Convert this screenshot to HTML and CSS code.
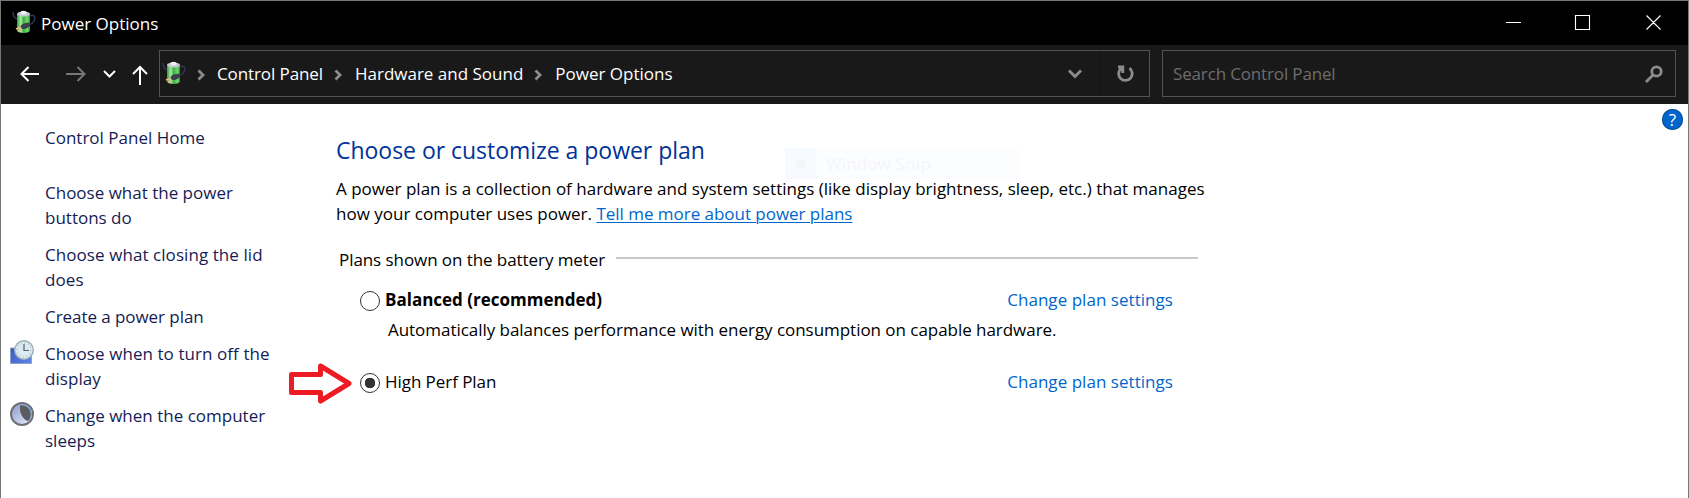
FILE: index.html
```
<!DOCTYPE html>
<html lang="en">
<head>
    <meta charset="UTF-8">
    <meta name="viewport" content="width=device-width, initial-scale=1.0">
    <title>Power Options</title>
    <link rel="stylesheet" href="styles.css">
</head>
<body>
    <svg class="defs" width="0" height="0">
        <defs>
            <linearGradient id="green" x1="0" x2="1" y1="0" y2="0">
                <stop offset="0" stop-color="#2f9e3a"/>
                <stop offset="0.3" stop-color="#a6eda0"/>
                <stop offset="0.5" stop-color="#3fae45"/>
                <stop offset="0.8" stop-color="#6fdc6c"/>
                <stop offset="1" stop-color="#2c8f35"/>
            </linearGradient>
            <linearGradient id="blue" x1="0" x2="1" y1="0" y2="1">
                <stop offset="0" stop-color="#3558c0"/>
                <stop offset="1" stop-color="#5f86e6"/>
            </linearGradient>
            <linearGradient id="moon" x1="0" x2="1" y1="0" y2="1">
                <stop offset="0" stop-color="#8796cc"/>
                <stop offset="1" stop-color="#eef2ff"/>
            </linearGradient>
        </defs>
        <symbol id="battery" viewBox="0 0 24 24">
            <path d="M1 2c0 4 2 6 4 7M18 6c4-2 6 1 4 5-1 2-2 3-4 3" fill="none" stroke="#34345a" stroke-width="1.500"/>
            <path d="M5 4h13v17c-2 2.500-11 2.500-13 0z" fill="url(#green)"/>
            <ellipse cx="11.500" cy="4" rx="6.500" ry="2.500" fill="#c9ccd6"/>
            <ellipse cx="11.500" cy="2.600" rx="3" ry="1.900" fill="#f1f1f6"/>
            <path d="M8 17c2-3 6-4.500 11-3.500-1 3-5 5.500-9 5z" fill="#3d4050" stroke="#22232e" stroke-width=".6"/>
            <path d="M9 17l-5 2M10 19l-4 2.500" stroke="#e0bd86" stroke-width="1.800"/>
        </symbol>
    </svg>

    <div class="window">
        <div class="titlebar">
            <svg class="app-icon"><use href="#battery"/></svg>
            <span class="title">Power Options</span>
            <svg class="controls" width="155" height="16" viewBox="0 0 155 16">
                <path d="M0 7.500h15M69.500 .5h14v14h-14zM140.500 .5l14 14M154.500 .5l-14 14" fill="none" stroke="#fff" stroke-width="1.100"/>
            </svg>
        </div>

        <div class="toolbar">
            <svg class="nav" width="130" height="24" viewBox="0 0 130 24" fill="none" stroke-width="2">
                <path d="M2 12h18M9.500 5l-7 7 7 7" stroke="#fff"/>
                <path d="M47 12h18M58.500 5l7 7-7 7" stroke="#777"/>
                <path d="M85 9l5.500 5.500L96 9" stroke="#fff"/>
                <path d="M121 23V5M114 12l7-7 7 7" stroke="#fff"/>
            </svg>
            <div class="address">
                <svg class="app-icon"><use href="#battery"/></svg>
                <svg class="chev" viewBox="0 0 8 12"><path d="M1.500 1.500L6 6l-4.500 4.500"/></svg>
                <span class="crumb first">Control Panel</span>
                <svg class="chev" viewBox="0 0 8 12"><path d="M1.500 1.500L6 6l-4.500 4.500"/></svg>
                <span class="crumb">Hardware and Sound</span>
                <svg class="chev" viewBox="0 0 8 12"><path d="M1.500 1.500L6 6l-4.500 4.500"/></svg>
                <span class="crumb">Power Options</span>
                <svg class="drop" width="14" height="10" viewBox="0 0 14 10"><path d="M1 1.500l6 6 6-6"/></svg>
                <div class="refresh">
                    <svg width="18" height="18" viewBox="0 0 18 18"><path d="M13.500 3.200a6.800 6.800 0 1 1-8.500 .3M2 2h4.800v6"/></svg>
                </div>
            </div>
            <div class="search">
                <span>Search Control Panel</span>
                <svg width="18" height="18" viewBox="0 0 18 18"><circle cx="11.500" cy="6.500" r="4.700"/><path d="M8 10l-7 7"/></svg>
            </div>
        </div>

        <div class="content">
            <div class="sidebar">
                <a class="home">Control Panel Home</a>
                <a class="task">Choose what the power<br>buttons do</a>
                <a class="task wide">Choose what closing the lid<br>does</a>
                <a class="task tight">Create a power plan</a>
                <a class="task wide">
                    <svg class="task-icon" viewBox="0 0 24 24">
                        <path d="M.5 8h21v15.500H.5z" fill="url(#blue)" stroke="#8e9fce"/>
                        <circle cx="14" cy="10" r="9.300" fill="#dcebf2" stroke="#9fb0ba" stroke-width="1.400"/>
                        <circle cx="14" cy="10" r="7" fill="none" stroke="#8ea3ae" stroke-dasharray="1 2.660"/>
                        <path d="M14 4v6.500h5" fill="none" stroke="#4c616d" stroke-width="1.200"/>
                    </svg>
                    Choose when to turn off the<br>display
                </a>
                <a class="task">
                    <svg class="task-icon" viewBox="0 0 24 24">
                        <circle cx="12" cy="12" r="11" fill="url(#moon)" stroke="#6c6f73" stroke-width="2"/>
                        <path d="M10 3.500c6-1.500 11 3 11 9 0 3-1.500 6-3.500 6.500C12.500 17 9 10 10 3.500z" fill="#5a5c5f"/>
                        <path d="M14 2.800c6 1.500 9 7.500 6.500 13.500" fill="none" stroke="#7ea6dc" stroke-width="1.300"/>
                    </svg>
                    Change when the computer<br>sleeps
                </a>
            </div>

            <div class="main">
                <h1>Choose or customize a power plan</h1>
                <p class="intro"><span class="first-line">A power plan is a collection of hardware and system settings (like display brightness, sleep, etc.) that manages</span><br>how your computer uses power. <a class="more">Tell me more about power plans</a></p>
                <div class="group"><span>Plans shown on the battery meter</span></div>
                <div class="plan">
                    <i class="radio"></i>
                    <b class="name">Balanced (recommended)</b>
                    <a class="change">Change plan settings</a>
                </div>
                <p class="desc">Automatically balances performance with energy consumption on capable hardware.</p>
                <div class="plan">
                    <i class="radio checked"></i>
                    <span class="name tight">High Perf Plan</span>
                    <a class="change">Change plan settings</a>
                    <svg class="arrow" width="64" height="42" viewBox="0 0 64 42">
                        <path d="M2.500 11.500h29V3L60 20.500 31.500 38v-8.500h-29z"/>
                    </svg>
                </div>
            </div>
            <div class="help">?</div>
        </div>

        <div class="snip"><i></i><span>Window Snip</span></div>
    </div>
</body>
</html>
```
FILE: styles.css
```
body {
    margin: 0;
    background: #fff;
    font-family: "Open Sans", "Noto Sans", sans-serif;
    font-size: 17px;
    line-height: 25px;
    color: #000;
    overflow: hidden;
    white-space: nowrap;
}

p, h1 {
    margin: 0;
}

svg {
    flex: none;
}

.defs {
    position: absolute;
}

.window {
    box-sizing: border-box;
    height: 498px;
    border: 1px solid #767676;
    border-bottom: 0;
}

/* title bar */
.titlebar {
    display: flex;
    align-items: center;
    height: 44px;
    padding: 0 27px 0 11px;
    background: #000;
    color: #fff;
}

.app-icon {
    width: 24px;
    height: 24px;
    margin-bottom: 2px;
}

.title {
    margin: 0 auto 0 5px;
}

/* toolbar */
.toolbar {
    display: flex;
    align-items: center;
    height: 59px;
    box-sizing: border-box;
    padding: 0 12px 2px 18px;
    background: #191919;
    color: #fff;
}

.address, .search {
    display: flex;
    align-items: center;
    box-sizing: border-box;
    height: 47px;
    border: 1px solid #535353;
}

.address {
    width: 991px;
    margin-left: 10px;
    padding-left: 2px;
}

.first {
    margin-left: -1px;
    letter-spacing: -0.1px;
}

.chev {
    width: 8px;
    height: 12px;
    margin: 2px 13px 0 11px;
}

.chev path, .drop path, .refresh path, .search svg {
    fill: none;
    stroke: #8c8c8c;
    stroke-width: 2.8;
}

.drop {
    margin-left: auto;
    margin-right: 17px;
}

.refresh {
    display: flex;
    align-items: center;
    justify-content: center;
    box-sizing: border-box;
    width: 50px;
    height: 45px;
    border-left: 1px solid #121212;
}

.search {
    flex: 1;
    justify-content: space-between;
    margin-left: 12px;
    padding: 0 12px 0 10px;
    color: #6d6d6d;
    letter-spacing: -0.15px;
}

/* page */
.content {
    display: flex;
}

.sidebar {
    display: flex;
    flex-direction: column;
    gap: 12px;
    box-sizing: border-box;
    width: 335px;
    padding: 21px 0 0 44px;
    color: #151c55;
}

.home {
    margin-bottom: 18px;
}

.task {
    position: relative;
}

.tight {
    letter-spacing: -0.06px;
}

.wide {
    letter-spacing: 0.07px;
}

.task-icon {
    position: absolute;
    left: -35px;
    top: -1px;
    width: 24px;
    height: 24px;
}

.main {
    width: 870px;
    padding-top: 30px;
}

h1 {
    font-size: 23px;
    font-weight: normal;
    line-height: 32px;
    letter-spacing: -0.03px;
    color: #003399;
}

.intro {
    margin-top: 10px;
}

.first-line {
    letter-spacing: 0.01px;
}

.more, .change {
    color: #0066cc;
}

.more {
    text-decoration: underline;
    text-decoration-thickness: 1px;
    text-underline-offset: 2px;
    letter-spacing: -0.03px;
}

.group {
    display: flex;
    align-items: center;
    width: 859px;
    margin: 21px 0 15px;
    padding-left: 3px;
    gap: 11px;
    letter-spacing: -0.07px;
}

.group::after {
    content: "";
    flex: 1;
    height: 2px;
    margin-bottom: 4px;
    background: #c8c8c8;
}

.plan {
    position: relative;
    display: flex;
    width: 813px;
    padding-left: 24px;
}

.radio {
    box-sizing: border-box;
    width: 20px;
    height: 20px;
    margin: 4px 5px 0 0;
    border: 1.5px solid #333;
    border-radius: 50%;
}

.checked {
    background: radial-gradient(circle, #333 5px, #fff 5.5px);
}

.change {
    margin-left: auto;
    letter-spacing: 0.04px;
}

.desc {
    margin: 5px 0 27px;
    padding-left: 52px;
    letter-spacing: -0.04px;
}

.arrow {
    position: absolute;
    left: -47px;
    top: -6px;
}

.arrow path {
    fill: none;
    stroke: #ed1c24;
    stroke-width: 5;
    stroke-linejoin: round;
}

.help {
    width: 21px;
    height: 21px;
    margin: 5px 5px 0 auto;
    border-radius: 50%;
    background: #0066cc;
    box-shadow: inset 0 0 0 1px #0a4f96;
    color: #fff;
    font-size: 17px;
    line-height: 21px;
    text-align: center;
}

/* fading snip mode entry */
.snip {
    position: absolute;
    left: 785px;
    top: 148px;
    display: flex;
    align-items: center;
    box-sizing: border-box;
    width: 235px;
    height: 31px;
    padding-left: 11px;
    gap: 20px;
    background: linear-gradient(90deg, #f7fbff 30px, #fbfdff 31px);
    color: #f5f5f7;
    letter-spacing: 0.15px;
}

.snip i {
    width: 10px;
    height: 10px;
    border-radius: 50%;
    background: #f5f5f7;
}
```
